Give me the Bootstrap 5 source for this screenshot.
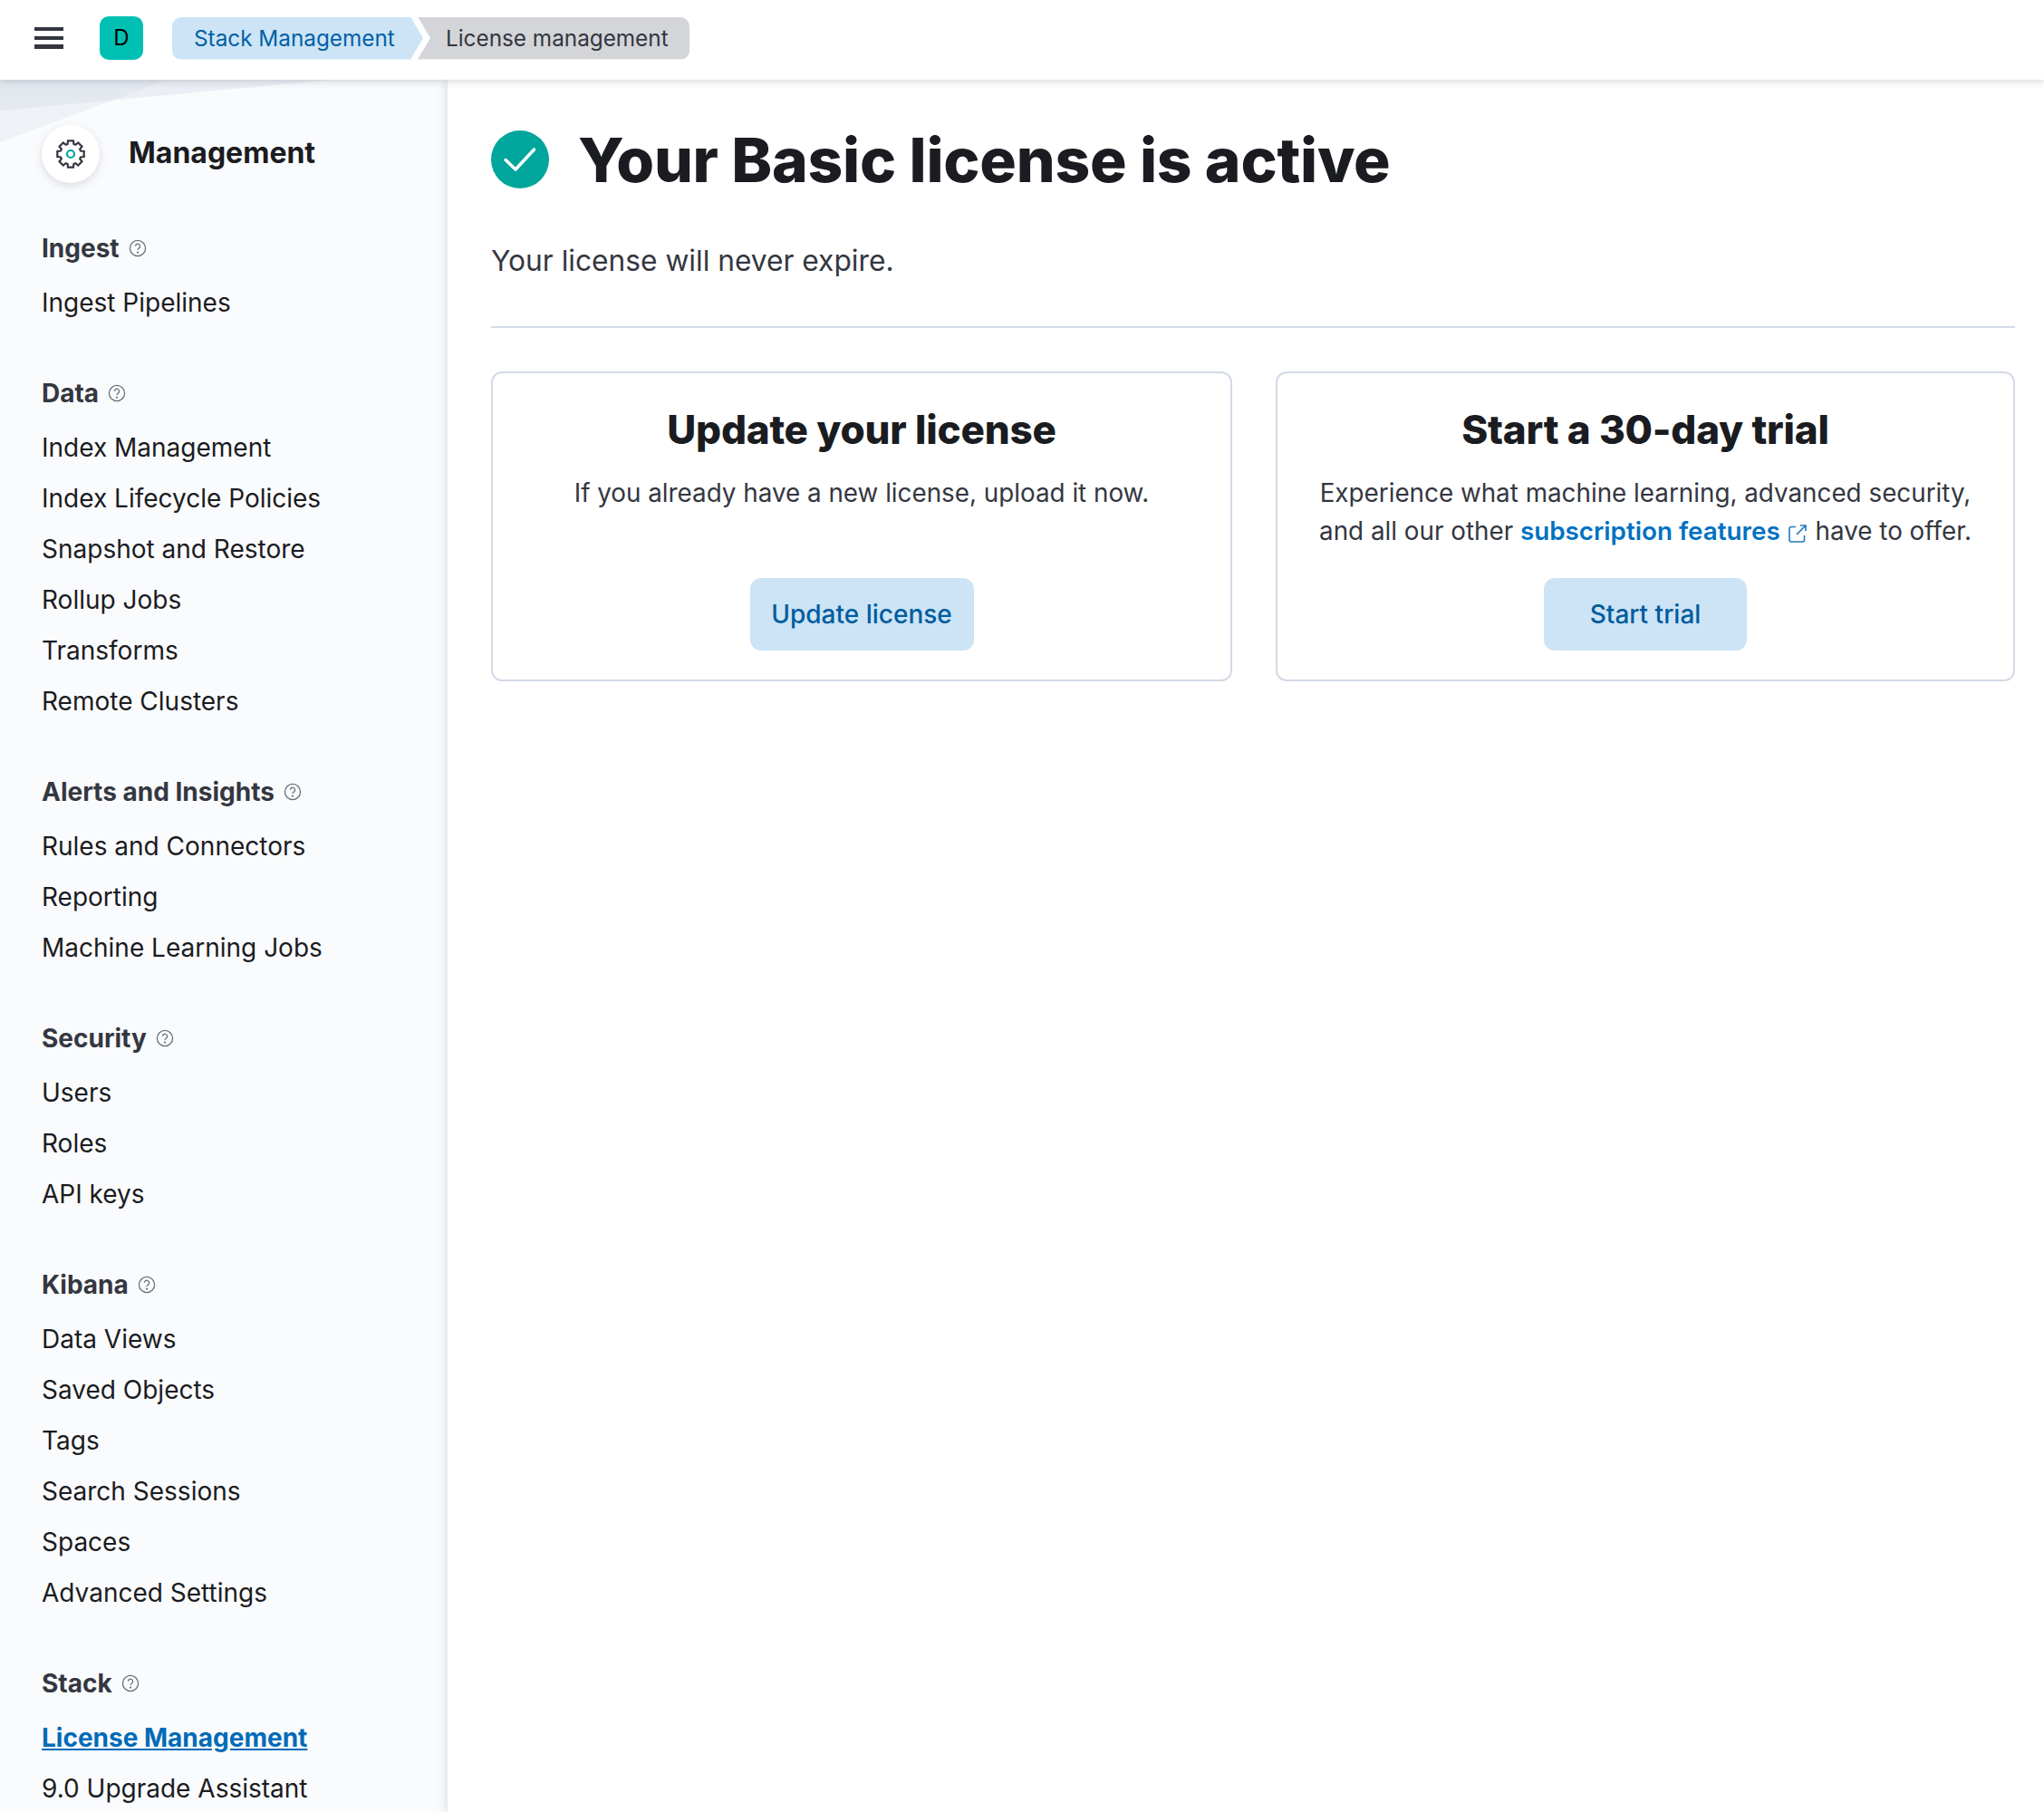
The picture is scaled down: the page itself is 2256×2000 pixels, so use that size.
<!DOCTYPE html>
<html lang="en">
<head>
  <meta charset="UTF-8">
  <meta name="viewport" content="width=device-width, initial-scale=1.0">
  <title>License management</title>
  <link href="https://cdn.jsdelivr.net/npm/bootstrap@5.3.0/dist/css/bootstrap.min.css" rel="stylesheet">
  <style>
    html, body { height: 100%; overflow: hidden; }
    body { font-family: Inter, "Liberation Sans", sans-serif; font-size: 28px; color: #343741; background: #fff; }
    .top-bar { height: 88px; padding: 0 0 4px 38px; background: #fff; position: relative; z-index: 3; box-shadow: 0 2px 8px rgba(105,112,125,.28); }
    .burger { width: 32px; height: 24px; border: 0; padding: 0; background: linear-gradient(#343741 0 4.5px, transparent 4.5px 10px, #343741 10px 14.5px, transparent 14.5px 19.5px, #343741 19.5px 24px); }
    .space-tile { width: 48px; height: 48px; margin-left: 40px; border-radius: 10px; background: #00bfb3; color: #000; font-size: 24px; }
    .crumbs { margin-left: 32px; height: 47px; font-size: 24.3px; }
    .crumb-a { width: 277px; padding-left: 24px; background: #cce4f5; color: #0061a6; border-radius: 10px 0 0 10px; clip-path: polygon(0 0, 263px 0, 100% 50%, 263px 100%, 0 100%); text-decoration: none; }
    .crumb-b { width: 300px; margin-left: -6px; padding-left: 31px; background: #d3d5d9; color: #343741; border-radius: 0 10px 10px 0; clip-path: polygon(0 0, 100% 0, 100% 100%, 0 100%, 14px 50%); }
    .page-wrap { height: calc(100% - 88px); }
    .side-nav { width: 494px; flex: none; padding: 50px 0 0 46px; background: #fafbfd; position: relative; }
    .side-art { position: absolute; left: 0; top: 0; }
    .side-head { height: 64px; margin-bottom: 52px; position: relative; }
    .gear-disc { width: 64px; height: 64px; background: #fff; border-radius: 50%; box-shadow: 0 3px 10px rgba(105,112,125,.22); }
    .side-title { margin: 0 0 3px 32px; font-size: 32px; line-height: 40px; font-weight: 700; color: #1a1c21; }
    .nav-group { margin-bottom: 52px; }
    .group-name { height: 40px; margin-bottom: 12px; font-size: 28px; font-weight: 700; color: #343741; }
    .group-name svg { margin-left: 10px; }
    .nav-item-link { display: block; height: 56px; line-height: 56px; color: #1a1c21; text-decoration: none; }
    .nav-item-link.current { color: #006bb8; font-weight: 700; text-decoration: underline; }
    .main-pane { padding: 56px 32px 0 48px; background: #fff; position: relative; box-shadow: -2px 0 10px rgba(105,112,125,.2); }
    .status-title { margin: 0; padding-top: 2px; font-size: 67.6px; line-height: 62px; font-weight: 800; letter-spacing: -.23px; color: #1a1c21; }
    .status-dot { width: 64px; height: 64px; margin-right: 32px; }
    .status-note { margin: 56px 0 0; font-size: 31.7px; line-height: 48px; }
    .status-rule { margin: 48px 0 48px; border: 0; border-top: 2px solid #d3dae6; opacity: 1; }
    .offer-grid { grid-template-columns: 818fr 816fr; }
    .offer-card { height: 342px; padding: 32px 30px; border: 2px solid #d3dae6; border-radius: 12px; text-align: center; }
    .offer-title { margin: 0 0 19px; font-size: 44px; line-height: 60px; font-weight: 800; letter-spacing: -.2px; color: #1a1c21; }
    .offer-text { margin: 0; font-size: 27.8px; line-height: 42px; color: #343741; }
    .offer-text a { color: #0071c2; font-weight: 600; text-decoration: none; }
    .offer-text svg { margin: 0 2px 0 9px; vertical-align: -3px; }
    .offer-btn { height: 80px; padding: 0 16px; border: 0; border-radius: 12px; background: #cce4f5; color: #005c9e; font-size: 28px; font-weight: 500; white-space: nowrap; }
    .offer-btn.wide { width: 224px; }
    .offer-btn.wider { width: 247px; }
  </style>
</head>
<body>
<header class="top-bar d-flex align-items-center">
  <button class="burger" type="button" aria-label="Toggle navigation"></button>
  <div class="space-tile d-flex align-items-center justify-content-center">D</div>
  <nav class="crumbs d-flex">
    <a class="crumb-a d-flex align-items-center" href="#">Stack Management</a>
    <span class="crumb-b d-flex align-items-center">License management</span>
  </nav>
</header>
<div class="page-wrap d-flex">
  <aside class="side-nav">
    <svg class="side-art" width="494" height="80" viewBox="0 0 494 80">
      <polygon points="0,0 367,0 0,34" fill="#d3dae6" fill-opacity=".38"/>
      <polygon points="0,0 185,0 0,69" fill="#d3dae6" fill-opacity=".3"/>
    </svg>
    <div class="side-head d-flex align-items-center">
      <div class="gear-disc d-flex align-items-center justify-content-center">
        <svg width="34" height="34" viewBox="0 0 34 34" fill="none">
          <path id="gearPath" stroke="#343741" stroke-width="2.2" stroke-linejoin="miter"/>
          <circle cx="17" cy="17" r="4" stroke="#00a69b" stroke-width="2.2"/>
        </svg>
      </div>
      <h2 class="side-title">Management</h2>
    </div>
    <div id="sideGroups"></div>
  </aside>
  <main class="main-pane flex-grow-1">
    <div class="d-flex align-items-center">
      <svg class="status-dot" viewBox="0 0 64 64">
        <circle cx="32" cy="32" r="32" fill="#00a69b"/>
        <path d="M16 32.5 L27 43 L47.5 21" fill="none" stroke="#fff" stroke-width="3.5" stroke-linecap="round" stroke-linejoin="round"/>
      </svg>
      <h1 class="status-title">Your Basic license is active</h1>
    </div>
    <p class="status-note">Your license will never expire.</p>
    <hr class="status-rule">
    <div class="offer-grid d-grid gap-5">
      <div class="offer-card d-flex flex-column align-items-center">
        <h3 class="offer-title">Update your license</h3>
        <p class="offer-text flex-grow-1">If you already have a new license, upload it now.</p>
        <button class="offer-btn wider" type="button">Update license</button>
      </div>
      <div class="offer-card d-flex flex-column align-items-center">
        <h3 class="offer-title">Start a 30-day trial</h3>
        <p class="offer-text flex-grow-1">Experience what machine learning, advanced security, and all our other <a href="#">subscription features<svg width="20" height="20" viewBox="0 0 20 20" fill="none" stroke="#1f78bd" stroke-width="1.6"><path d="M8 2.5H3a2 2 0 0 0-2 2V17a2 2 0 0 0 2 2H15.500a2 2 0 0 0 2-2V12"/><path d="M9 11L19 1M13 1h6V7"/></svg></a> have to offer.</p>
        <button class="offer-btn wide" type="button">Start trial</button>
      </div>
    </div>
  </main>
</div>
<script>
  const groups = [
    ['Ingest', ['Ingest Pipelines']],
    ['Data', ['Index Management', 'Index Lifecycle Policies', 'Snapshot and Restore', 'Rollup Jobs', 'Transforms', 'Remote Clusters']],
    ['Alerts and Insights', ['Rules and Connectors', 'Reporting', 'Machine Learning Jobs']],
    ['Security', ['Users', 'Roles', 'API keys']],
    ['Kibana', ['Data Views', 'Saved Objects', 'Tags', 'Search Sessions', 'Spaces', 'Advanced Settings']],
    ['Stack', ['License Management', '9.0 Upgrade Assistant']]
  ];
  const helpIcon = '<svg width="20" height="20" viewBox="0 0 20 20" fill="none" stroke="#69707d" stroke-width="1.3"><circle cx="10" cy="10" r="8.6"/><path d="M7.4 7.8a2.6 2.6 0 1 1 4 2.2c-.9.6-1.4 1-1.4 2"/><circle cx="10" cy="14.6" r=".5" fill="#69707d"/></svg>';
  document.getElementById('sideGroups').innerHTML = groups.map(([name, items]) => `
    <div class="nav-group">
      <div class="group-name d-flex align-items-center">${name}${helpIcon}</div>
      ${items.map(i => `<a href="#" class="nav-item-link${i === 'License Management' ? ' current' : ''}">${i}</a>`).join('')}
    </div>`).join('');

  // 8 tooth gear outline
  const pts = [];
  for (let t = 0; t < 8; t++) {
    const a = t * Math.PI / 4 - Math.PI / 2;
    [[-0.3, 11.5], [-0.2, 15], [0.2, 15], [0.3, 11.5]].forEach(([d, r]) => {
      pts.push((17 + r * Math.cos(a + d)).toFixed(2) + ' ' + (17 + r * Math.sin(a + d)).toFixed(2));
    });
  }
  document.getElementById('gearPath').setAttribute('d', 'M' + pts.join('L') + 'Z');
</script>
<script src="https://cdn.jsdelivr.net/npm/bootstrap@5.3.0/dist/js/bootstrap.bundle.min.js"></script>
</body>
</html>
